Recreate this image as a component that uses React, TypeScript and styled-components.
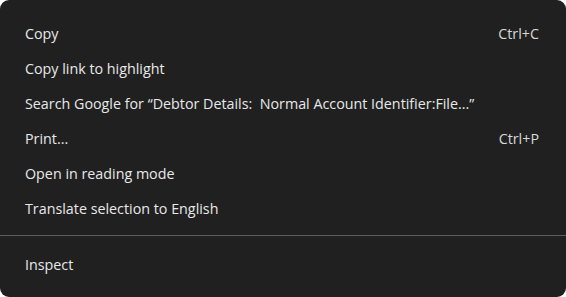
import React from "react";
import styled, { createGlobalStyle } from "styled-components";

const Global = createGlobalStyle`
  html, body { margin: 0; padding: 0; background: #ffffff; }
  body { width: 566px; height: 297px; overflow: hidden; }
`;

const Menu = styled.div`
  position: relative;
  box-sizing: border-box;
  width: 566px;
  height: 297px;
  background: #202020;
  border-radius: 9px;
  padding: 16px 0 15px;
  display: flex;
  flex-direction: column;
  font-family: "Open Sans", "Noto Sans", sans-serif;
  font-size: 14.3px;
  color: #e8e8e8;
`;

const Item = styled.div`
  height: 35px;
  display: flex;
  align-items: center;
  justify-content: space-between;
  padding: 0 27px 0 25px;
  white-space: nowrap;
`;

const Label = styled.span``;

const Shortcut = styled.span`
  color: #d8d8d8;
`;

const Separator = styled.div`
  height: 1px;
  background: #5e5e5e;
  margin: 9px 0 11px;
`;

const items: { label: string; shortcut?: string }[] = [
  { label: "Copy", shortcut: "Ctrl+C" },
  { label: "Copy link to highlight" },
  { label: "Search Google for \u201CDebtor Details:\u00A0 Normal Account Identifier:File...\u201D" },
  { label: "Print...", shortcut: "Ctrl+P" },
  { label: "Open in reading mode" },
  { label: "Translate selection to English" },
];

export default function App() {
  return (
    <>
      <Global />
      <Menu>
        {items.map((it) => (
          <Item key={it.label}>
            <Label>{it.label}</Label>
            {it.shortcut && <Shortcut>{it.shortcut}</Shortcut>}
          </Item>
        ))}
        <Separator />
        <Item>
          <Label>Inspect</Label>
        </Item>
      </Menu>
    </>
  );
}
